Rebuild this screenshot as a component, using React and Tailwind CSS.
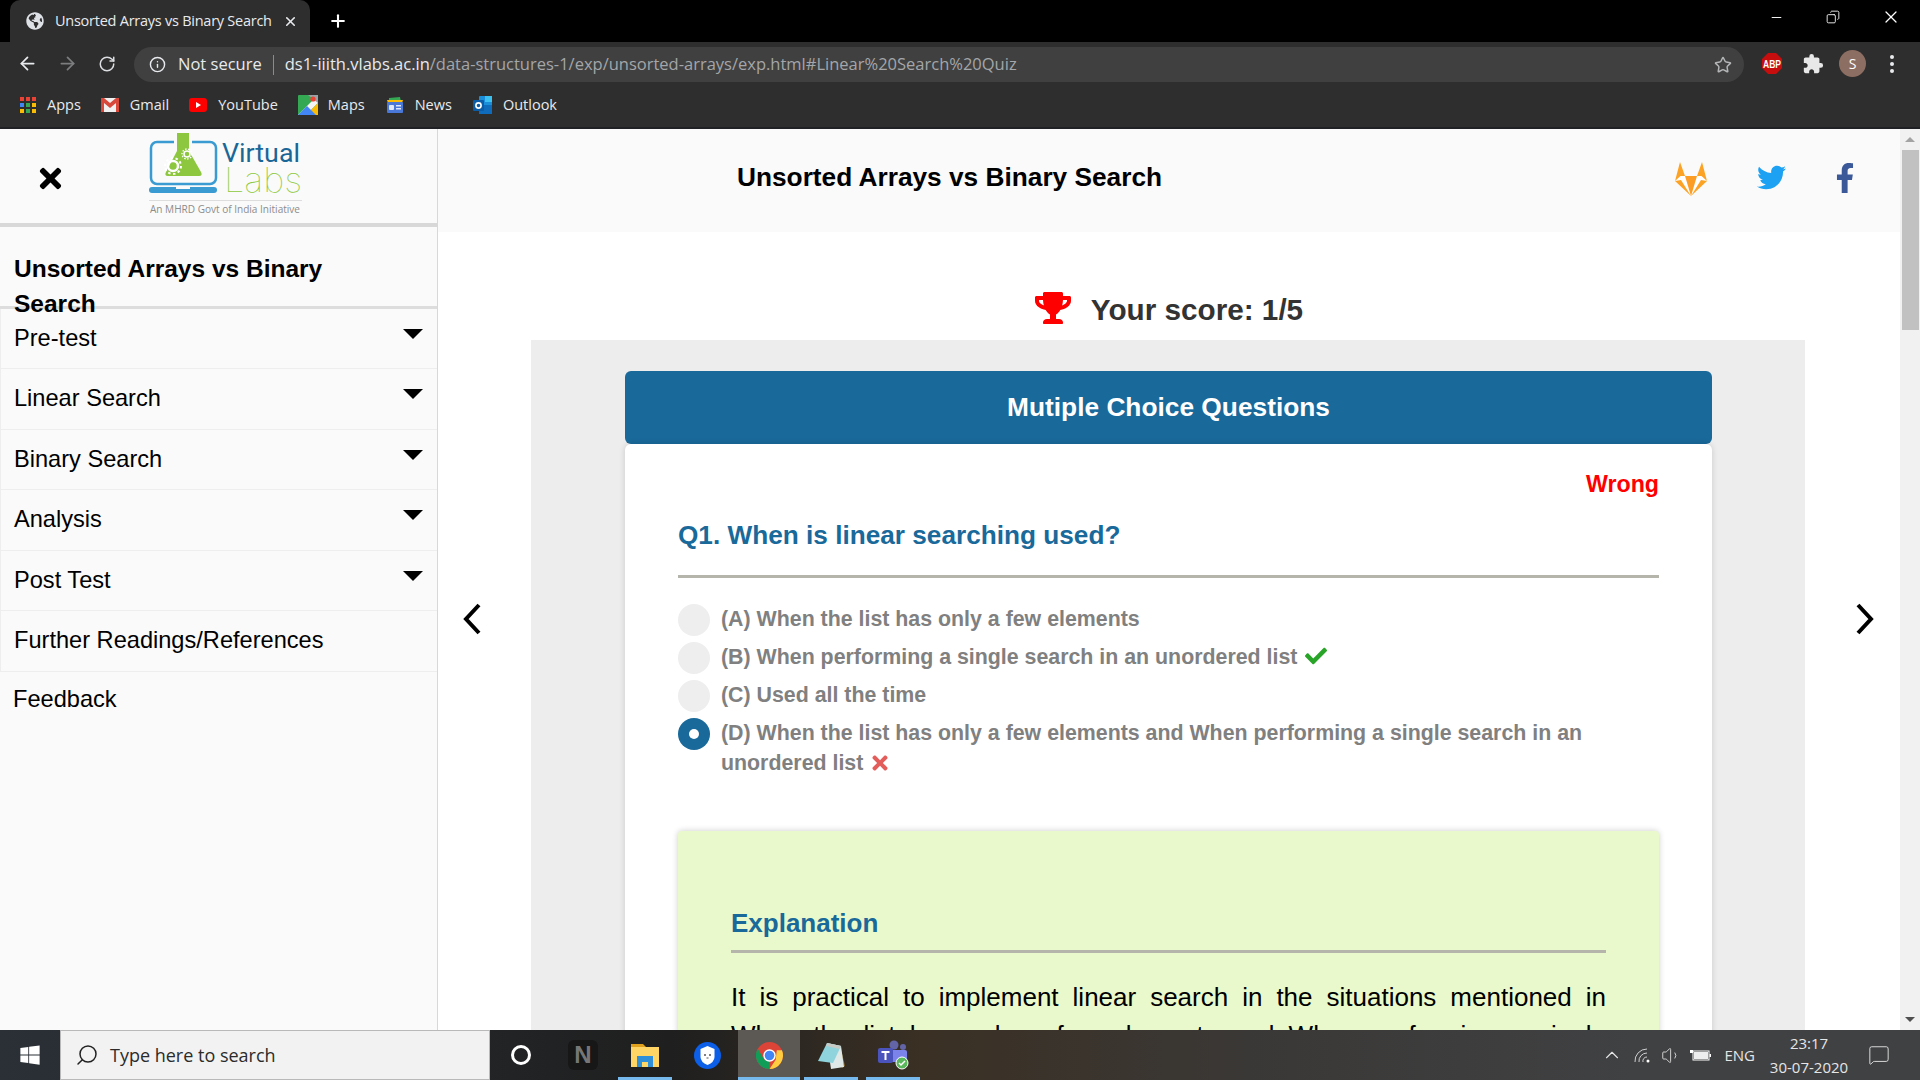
import { ArrowLeft, ArrowRight, RotateCw, Info, Star, Plus, X, Minus, Copy, Search, ChevronUp, Volume1, MessageSquare } from 'lucide-react';
import { FaTimes, FaTrophy, FaCheck, FaTwitter, FaFacebookF, FaWindows, FaGlobeAmericas } from 'react-icons/fa';
import { MdExtension } from 'react-icons/md';

const menuItems = ['Pre-test', 'Linear Search', 'Binary Search', 'Analysis', 'Post Test'];

const options = [
    { id: 'A', text: 'When the list has only a few elements' },
    { id: 'B', text: 'When performing a single search in an unordered list', mark: 'right' },
    { id: 'C', text: 'Used all the time' },
    { id: 'D', text: 'When the list has only a few elements and When performing a single search in an unordered list', mark: 'wrong', selected: true },
];

const AppsIcon = () => (
    <svg width="16" height="16" viewBox="0 0 16 16">
        {['#ea4335', '#ea4335', '#ea4335', '#4285f4', '#34a853', '#fbbc05', '#fbbc05', '#34a853', '#fbbc05'].map((c, i) => (
            <rect key={i} x={(i % 3) * 6} y={Math.floor(i / 3) * 6} width="4" height="4" fill={c} />
        ))}
    </svg>
);

const GmailIcon = () => (
    <svg width="18" height="16" viewBox="0 0 18 16">
        <rect x="0" y="1" width="18" height="14" fill="#f1f1f1" />
        <path d="M0 1h3l6 5 6-5h3v14h-3V6l-6 5-6-5v9H0z" fill="#d9493b" />
    </svg>
);

const YoutubeIcon = () => (
    <svg width="18" height="14" viewBox="0 0 18 14">
        <rect width="18" height="14" rx="3" fill="#f00" />
        <path d="M7 4l5 3-5 3z" fill="#fff" />
    </svg>
);

const MapsIcon = () => (
    <svg width="20" height="20" viewBox="0 0 20 20">
        <rect width="20" height="20" rx="1" fill="#34a853" />
        <path d="M0 20L20 0v8L8 20z" fill="#f5f5f5" />
        <path d="M8 20l12-12v12z" fill="#fbbc05" />
        <path d="M0 20L9 11 18 20z" fill="#4285f4" />
        <path d="M10 0h10v8z" fill="#9aa0a6" />
        <circle cx="15" cy="4" r="2.6" fill="#ea4335" />
    </svg>
);

const NewsIcon = () => (
    <svg width="18" height="18" viewBox="0 0 18 18">
        <path d="M3 2l11-1 1 5H3z" fill="#34a853" />
        <path d="M1 4h16l-1 3H2z" fill="#fbbc05" />
        <rect x="1" y="6" width="16" height="11" rx="1" fill="#4a78d8" />
        <rect x="3" y="9" width="5" height="5" rx="1" fill="#dfe8fb" />
        <rect x="10" y="9" width="5" height="1.5" fill="#dfe8fb" />
        <rect x="10" y="12" width="5" height="1.5" fill="#dfe8fb" />
    </svg>
);

const OutlookIcon = () => (
    <svg width="20" height="20" viewBox="0 0 20 20">
        <rect x="6" y="1" width="13" height="18" rx="1" fill="#1a8ed8" />
        <rect x="12" y="1" width="7" height="6" fill="#3cc0f0" />
        <rect x="6" y="10" width="13" height="9" fill="#0f6cbd" />
        <rect x="0" y="5" width="11" height="11" rx="1" fill="#0a5ba8" />
        <circle cx="5.5" cy="10.5" r="2.6" fill="none" stroke="#fff" strokeWidth="1.6" />
    </svg>
);

const AbpIcon = () => (
    <svg width="20" height="21" viewBox="0 0 20 21">
        <path d="M6 0h8l6 6v9l-6 6H6l-6-6V6z" fill="#c70d0d" />
        <text x="10" y="14.5" textAnchor="middle" fontSize="10" fontWeight="700" fill="#fff" fontFamily="Liberation Sans, sans-serif" textLength="18" lengthAdjust="spacingAndGlyphs">ABP</text>
    </svg>
);

const LabsLogo = () => (
    <svg width="156" height="84" viewBox="0 0 156 84">
        <rect x="2" y="9" width="65" height="42" rx="6" fill="none" stroke="#3a9bd2" strokeWidth="2.500" />
        <rect x="0" y="54" width="68" height="6" rx="3" fill="#3a9bd2" />
        <rect x="27" y="54" width="14" height="2" fill="#fafafa" />
        <path d="M25 6h18v11l13 27H13l12-27z" fill="#fafafa" />
        <path d="M28 0h12v18l12 21q2 4-2 4H19q-4 0-2-4l11-21z" fill="#8dc63f" />
        <circle cx="24" cy="33" r="5" fill="none" stroke="#fff" strokeWidth="2.500" />
        <circle cx="24" cy="33" r="8" fill="none" stroke="#fff" strokeWidth="2" strokeDasharray="2.500 2.500" />
        <circle cx="38" cy="21" r="3" fill="none" stroke="#fff" strokeWidth="1.500" />
        <circle cx="38" cy="21" r="5" fill="none" stroke="#fff" strokeWidth="1.300" strokeDasharray="1.500 1.500" />
        <text x="73" y="29" fontSize="26" fontWeight="400" fill="#1a6797" fontFamily="Roboto, sans-serif" textLength="78" lengthAdjust="spacingAndGlyphs">Virtual</text>
        <text x="75" y="59" fontSize="34" fontWeight="100" fill="#8cc93a" fontFamily="Inter, sans-serif" textLength="78" lengthAdjust="spacingAndGlyphs">Labs</text>
        <rect x="0" y="67" width="153" height="1" fill="#dddddd" />
        <text x="1" y="80" fontSize="10.500" fill="#8c8c8c" fontFamily="Open Sans, sans-serif" textLength="150" lengthAdjust="spacingAndGlyphs">An MHRD Govt of India Initiative</text>
    </svg>
);

const GitlabFox = () => (
    <svg width="34" height="36" viewBox="0 0 34 36">
        <path d="M17 36L1 21 6 2l5 14h12l5-14 5 19z" fill="#ffffff" />
        <path d="M6 2L1 21l5.500-5h4.500zM28 2l5 19-5.500-5H23z" fill="#fca326" />
        <path d="M1 21l16 15L7 20zM33 21L17 36l10-16z" fill="#fca326" />
        <path d="M11 16h12l-6 20z" fill="#fc9d26" />
    </svg>
);

const ChromeIcon = () => (
    <svg width="27" height="27" viewBox="0 0 26 26">
        <circle cx="13" cy="13" r="13" fill="#db4437" />
        <path d="M13 26A13 13 0 0 1 1.700 6.500L8 17l5 1z" fill="#0f9d58" />
        <path d="M13 26l6-9 1-9h5A13 13 0 0 1 13 26z" fill="#ffcd40" />
        <circle cx="13" cy="13" r="6" fill="#fff" />
        <circle cx="13" cy="13" r="4.600" fill="#4285f4" />
    </svg>
);

const SidebarRow = ({ label, arrow }) => (
    <div className="h-[60.500px] shrink-0 flex items-center justify-between pl-[13px] pr-[14px] border-b border-l border-[#eeeeee]">
        <span className="text-[23.600px] text-black">{label}</span>
        {arrow && <span className="w-0 h-0 border-x-[10px] border-x-transparent border-t-[10px] border-t-black -mt-[9px]" />}
    </div>
);

const Bookmark = ({ icon, label, gap }) => (
    <div className={`flex items-center ${gap}`}>
        {icon}
        <span className="text-[14.500px] text-[#e8eaed]">{label}</span>
    </div>
);

const TaskbarIcon = ({ children, active, running }) => (
    <div className={`relative w-[62px] h-full flex items-center justify-center ${active ? 'bg-[#5c5853]' : ''}`}>
        {children}
        {running && <span className={`absolute bottom-0 h-[3px] bg-[#76b9ed] ${active ? 'left-0 right-0' : 'left-1 right-1'}`} />}
    </div>
);

const App = () => {
    return (
        <div className="h-screen w-full flex flex-col overflow-hidden bg-white font-['Liberation_Sans',Arial,sans-serif]">
            {/* browser chrome */}
            <div className="h-[42px] shrink-0 bg-black flex items-end font-['Open_Sans',sans-serif]">
                <div className="ml-[10px] w-[300px] h-[42px] bg-[#2e2e2e] rounded-t-[10px] flex items-center pl-[16px] pr-[12px] text-[#e8eaed]">
                    <FaGlobeAmericas size={18} className="text-[#dee1e6] shrink-0" />
                    <span className="ml-[11px] text-[14.500px] tracking-[-0.25px] whitespace-nowrap flex-1">Unsorted Arrays vs Binary Search</span>
                    <X size={15} strokeWidth={2.500} />
                </div>
                <div className="h-[42px] flex items-center ml-[18px]">
                    <Plus size={20} strokeWidth={2.500} className="text-white" />
                </div>
                <div className="flex-1" />
                <div className="h-[42px] flex items-center pb-2 text-white">
                    <Minus size={15} strokeWidth={1.500} className="mr-[42px]" />
                    <Copy size={14} strokeWidth={1.500} className="mr-[41px] -scale-x-100" />
                    <X size={20} strokeWidth={1.500} className="mr-[19px]" />
                </div>
            </div>
            <div className="h-[43px] shrink-0 bg-[#2e2e2e] flex items-center font-['Open_Sans',sans-serif]">
                <ArrowLeft size={21} className="ml-[17px] text-[#e8eaed]" />
                <ArrowRight size={21} className="ml-[19px] text-[#7c7d7f]" />
                <RotateCw size={18} className="ml-[20px] text-[#dcdde0]" />
                <div className="ml-[18px] w-[1610px] h-[35px] mt-[2px] rounded-full bg-[#404040] flex items-center pl-[15px] whitespace-nowrap">
                    <Info size={17} className="text-[#e8eaed] shrink-0" />
                    <span className="ml-[12px] text-[16.500px] text-[#e8eaed]">Not secure</span>
                    <span className="mx-[11px] w-px h-[20px] bg-[#8a8b8d]" />
                    <span className="text-[16.500px] text-[#e8eaed]">ds1-iiith.vlabs.ac.in</span>
                    <span className="text-[16.500px] text-[#a4a6a9]">/data-structures-1/exp/unsorted-arrays/exp.html#Linear%20Search%20Quiz</span>
                    <Star size={18} className="ml-auto mr-[12px] text-[#b4b5b7]" />
                </div>
                <div className="ml-[18px]"><AbpIcon /></div>
                <MdExtension size={22} className="ml-[20px] text-[#e8e8e8]" />
                <div className="ml-[15px] w-[27px] h-[27px] rounded-full bg-[#8d6e63] text-white text-[14px] flex items-center justify-center">S</div>
                <div className="ml-[24px] flex flex-col gap-[3px]">
                    <span className="w-[4px] h-[4px] rounded-full bg-[#e8eaed]" />
                    <span className="w-[4px] h-[4px] rounded-full bg-[#e8eaed]" />
                    <span className="w-[4px] h-[4px] rounded-full bg-[#e8eaed]" />
                </div>
            </div>
            <div className="h-[44px] shrink-0 bg-[#2e2e2e] border-b-2 border-[#202124] flex items-center pl-[20px] pb-[2px] font-['Open_Sans',sans-serif]">
                <Bookmark icon={<AppsIcon />} label="Apps" gap="gap-[11px]" />
                <div className="ml-[20px]"><Bookmark icon={<GmailIcon />} label="Gmail" gap="gap-[11px]" /></div>
                <div className="ml-[20px]"><Bookmark icon={<YoutubeIcon />} label="YouTube" gap="gap-[11px]" /></div>
                <div className="ml-[20px]"><Bookmark icon={<MapsIcon />} label="Maps" gap="gap-[10px]" /></div>
                <div className="ml-[21px]"><Bookmark icon={<NewsIcon />} label="News" gap="gap-[11px]" /></div>
                <div className="ml-[21px]"><Bookmark icon={<OutlookIcon />} label="Outlook" gap="gap-[10px]" /></div>
            </div>

            {/* page */}
            <div className="flex-1 min-h-0 flex">
                <aside className="w-[438px] shrink-0 bg-[#fafafa] border-r border-[#d8d8d8] flex flex-col overflow-hidden">
                    <div className="h-[94px] shrink-0 flex items-center">
                        <FaTimes size={31} className="ml-[35px] mt-[4px] text-black" />
                        <div className="ml-[83px] -mt-[2px]"><LabsLogo /></div>
                    </div>
                    <div className="h-[4px] shrink-0 bg-[#d8d8d8]" />
                    <div className="relative z-10 h-[78.600px] shrink-0 pl-3.5 pt-[24px] pr-[60px]">
                        <h2 className="text-[24.500px] leading-[35px] font-bold text-black">Unsorted Arrays vs Binary Search</h2>
                    </div>
                    <div className="h-[3px] shrink-0 bg-[#dddddd]" />
                    {menuItems.map((item) => (
                        <SidebarRow key={item} label={item} arrow />
                    ))}
                    <SidebarRow label="Further Readings/References" />
                    <div className="pl-[13px] pt-[10px] text-[23.600px] text-black">Feedback</div>
                </aside>

                <main className="flex-1 min-w-0 flex flex-col overflow-hidden">
                    <header className="h-[103px] shrink-0 bg-[#fafafa] flex items-center">
                        <h1 className="ml-[299px] -mt-[5px] text-[26.250px] font-bold text-black whitespace-nowrap">Unsorted Arrays vs Binary Search</h1>
                        <div className="ml-auto mr-[40px] -mt-[6px] flex items-center">
                            <GitlabFox />
                            <FaTwitter size={29} className="ml-[49px] text-[#1da1f2]" />
                            <FaFacebookF size={30} className="ml-[44px] text-[#3b5998]" />
                        </div>
                    </header>

                    <div className="h-[108px] shrink-0 flex items-center justify-center pt-[48px]">
                        <FaTrophy size={36} className="text-[#ff0000] -mt-[4px]" />
                        <span className="ml-[20px] text-[29.700px] font-bold text-[#333333]">Your score: 1/5</span>
                    </div>

                    <div className="flex-1 min-h-0 flex">
                        <div className="w-[93px] shrink-0 flex items-center pl-[24px] pb-[132px]">
                            <svg width="20" height="32" viewBox="0 0 20 32"><path d="M17 2L4 16l13 14" fill="none" stroke="#000" strokeWidth="4" /></svg>
                        </div>
                        <section className="flex-1 min-w-0 bg-[#ededed] pt-[31px] pl-[94px] pr-[93px] overflow-hidden">
                            <div className="h-[73px] bg-[#19699a] rounded-[6px] flex items-center justify-center">
                                <span className="text-[26.300px] font-bold text-white">Mutiple Choice Questions</span>
                            </div>
                            <div className="bg-white rounded-t-[6px] shadow-[0_0_6px_rgba(0,0,0,0.15)] px-[53px] pt-[23px] pb-[40px]">
                                <p className="text-right text-[23.200px] font-bold text-[#ff0000]">Wrong</p>
                                <h3 className="mt-[14px] text-[26.200px] font-bold text-[#19699a]">Q1. When is linear searching used?</h3>
                                <hr className="mt-[20px] border-t-[3px] border-[#b5b5ac]" />
                                <div className="mt-[26px]">
                                    {options.map((opt) => (
                                        <div key={opt.id} className="flex items-start mb-[6px]">
                                            <span className={`w-[32px] h-[32px] shrink-0 rounded-full flex items-center justify-center ${opt.selected ? 'bg-[#19699a]' : 'bg-[#eeeeee]'}`}>
                                                {opt.selected && <span className="w-[10px] h-[10px] rounded-full bg-white" />}
                                            </span>
                                            <span className="ml-[11px] text-[21.350px] leading-[30px] font-bold text-[#808080]">
                                                ({opt.id}) {opt.text}
                                                {opt.mark === 'right' && <FaCheck size={22} className="inline ml-[8px] -mt-[4px] text-[#28a428]" />}
                                                {opt.mark === 'wrong' && <FaTimes size={22} className="inline ml-[6px] -mt-[3px] text-[#e35d5b]" />}
                                            </span>
                                        </div>
                                    ))}
                                </div>
                                <div className="mt-[53px] bg-[#e9f9cb] rounded-[4px] shadow-[0_0_6px_rgba(0,0,0,0.2)] px-[53px] pt-[73px] pb-[40px]">
                                    <h4 className="text-[26px] font-bold text-[#19699a]">Explanation</h4>
                                    <hr className="mt-[7px] border-t-[3px] border-[#b5b5ac]" />
                                    <p className="mt-[25px] text-[26px] leading-[38px] text-justify text-black">
                                        It is practical to implement linear search in the situations mentioned in When the list has only a few elements and When performing a single search in an unordered list, but for larger lists binary search is used.
                                    </p>
                                </div>
                            </div>
                        </section>
                        <div className="w-[95px] shrink-0 flex items-center pl-[50px] pb-[132px]">
                            <svg width="20" height="32" viewBox="0 0 20 32"><path d="M3 2l13 14L3 30" fill="none" stroke="#000" strokeWidth="4" /></svg>
                        </div>
                    </div>
                </main>

                <div className="w-[20px] shrink-0 bg-[#f1f1f1] flex flex-col items-center">
                    <div className="h-[21px] w-full flex items-center justify-center">
                        <span className="w-0 h-0 border-x-[5px] border-x-transparent border-b-[5px] border-b-[#a3a3a3]" />
                    </div>
                    <div className="h-[180px] w-[17px] bg-[#c1c1c1]" />
                    <div className="flex-1" />
                    <div className="h-[21px] w-full flex items-center justify-center">
                        <span className="w-0 h-0 border-x-[5px] border-x-transparent border-t-[5px] border-t-[#505050]" />
                    </div>
                </div>
            </div>

            {/* taskbar */}
            <div className="h-[50px] shrink-0 flex bg-[linear-gradient(90deg,#2a3036_0%,#1f1f1f_35%,#3a3024_48%,#3a3836_65%,#404143_85%)] font-['Open_Sans',sans-serif]">
                <div className="w-[60px] flex items-center justify-center">
                    <FaWindows size={22} className="text-white" />
                </div>
                <div className="w-[430px] bg-[#f2f2f2] border border-[#b9b9b9] flex items-center pl-[14px]">
                    <Search size={24} strokeWidth={1.500} className="text-[#222] -scale-x-100" />
                    <span className="ml-[11px] text-[18px] text-[#2b2b2b]">Type here to search</span>
                </div>
                <div className="flex items-center h-full">
                    <TaskbarIcon><span className="w-[20px] h-[20px] rounded-full border-[3px] border-white" /></TaskbarIcon>
                    <TaskbarIcon>
                        <span className="w-[30px] h-[30px] rounded-[6px] bg-[#171717] flex items-center justify-center text-[#767676] text-[24px] font-bold font-['Liberation_Sans',sans-serif]">N</span>
                    </TaskbarIcon>
                    <TaskbarIcon running>
                        <svg width="28" height="24" viewBox="0 0 28 24">
                            <path d="M0 1h12l3 3H0z" fill="#e0a21e" />
                            <rect y="4" width="28" height="20" fill="#ffd566" />
                            <path d="M6 24V13h16v11h-5v-5h-6v5z" fill="#2f8fd8" />
                        </svg>
                    </TaskbarIcon>
                    <TaskbarIcon>
                        <svg width="27" height="27" viewBox="0 0 27 27">
                            <circle cx="13.500" cy="13.500" r="13.500" fill="#0d5fe8" />
                            <path d="M13.500 4l7 3v8q0 5-7 8-7-3-7-8V7z" fill="#fff" />
                            <circle cx="11" cy="13" r="1" fill="#555" />
                            <circle cx="16" cy="13" r="1" fill="#555" />
                            <path d="M12.500 16h2" stroke="#555" strokeWidth="1" />
                        </svg>
                    </TaskbarIcon>
                    <TaskbarIcon active running><ChromeIcon /></TaskbarIcon>
                    <TaskbarIcon running>
                        <svg width="27" height="27" viewBox="0 0 27 27">
                            <path d="M22 3l5 21-3 2-3-6z" fill="#8a6b30" />
                            <path d="M9 1l14 3 3 21-13 2z" fill="#dfe8e6" />
                            <path d="M9 1l14 3-8 17L0 19z" fill="#8fd4dc" />
                            <path d="M9 1l14 3-1 3-14-3z" fill="#c7c9c4" />
                        </svg>
                    </TaskbarIcon>
                    <TaskbarIcon running>
                        <svg width="32" height="30" viewBox="0 0 32 30">
                            <circle cx="17" cy="5" r="4.500" fill="#6264a7" />
                            <circle cx="26" cy="7" r="3" fill="#6264a7" />
                            <rect x="12" y="10" width="18" height="12" rx="2" fill="#7b83eb" />
                            <rect x="1" y="8" width="15" height="15" rx="2" fill="#4b53bc" />
                            <path d="M4.500 11h8v2h-3v7h-2v-7h-3z" fill="#fff" />
                            <circle cx="25" cy="23" r="6" fill="#5bb75b" stroke="#fff" strokeWidth="1" />
                            <path d="M22 23l2 2 4-4" fill="none" stroke="#fff" strokeWidth="1.500" />
                        </svg>
                    </TaskbarIcon>
                </div>
                <div className="flex-1" />
                <div className="flex items-center text-[#e6e6e6] whitespace-nowrap">
                    <ChevronUp size={22} strokeWidth={1.200} className="mr-[11px]" />
                    <svg width="18" height="16" viewBox="0 0 18 16" className="mr-[9px]">
                        <path d="M1 15A12 12 0 0 1 13 2M5 15A8 8 0 0 1 13 6M9 15a4 4 0 0 1 4-5" fill="none" stroke="#d0d0d0" strokeWidth="1" />
                        <circle cx="14" cy="14" r="1.500" fill="#fff" />
                    </svg>
                    <Volume1 size={21} strokeWidth={1} className="mr-[8px]" />
                    <svg width="21" height="14" viewBox="0 0 21 14" className="mr-[13px]">
                        <rect x="3" y="3" width="16" height="9" fill="none" stroke="#fff" strokeWidth="1" />
                        <rect x="4" y="4" width="14" height="7" fill="#eee" />
                        <rect x="19.500" y="6" width="1.500" height="3" fill="#fff" />
                        <path d="M0 2h3v3H0z" fill="#fff" />
                    </svg>
                    <span className="text-[15px] mr-[14px]">ENG</span>
                    <div className="w-[80px] flex flex-col items-center text-[15px] leading-[24px]">
                        <span>23:17</span>
                        <span>30-07-2020</span>
                    </div>
                    <MessageSquare size={22} strokeWidth={1} className="ml-[19px] mr-[30px]" />
                </div>
            </div>
        </div>
    );
};

export default App;
